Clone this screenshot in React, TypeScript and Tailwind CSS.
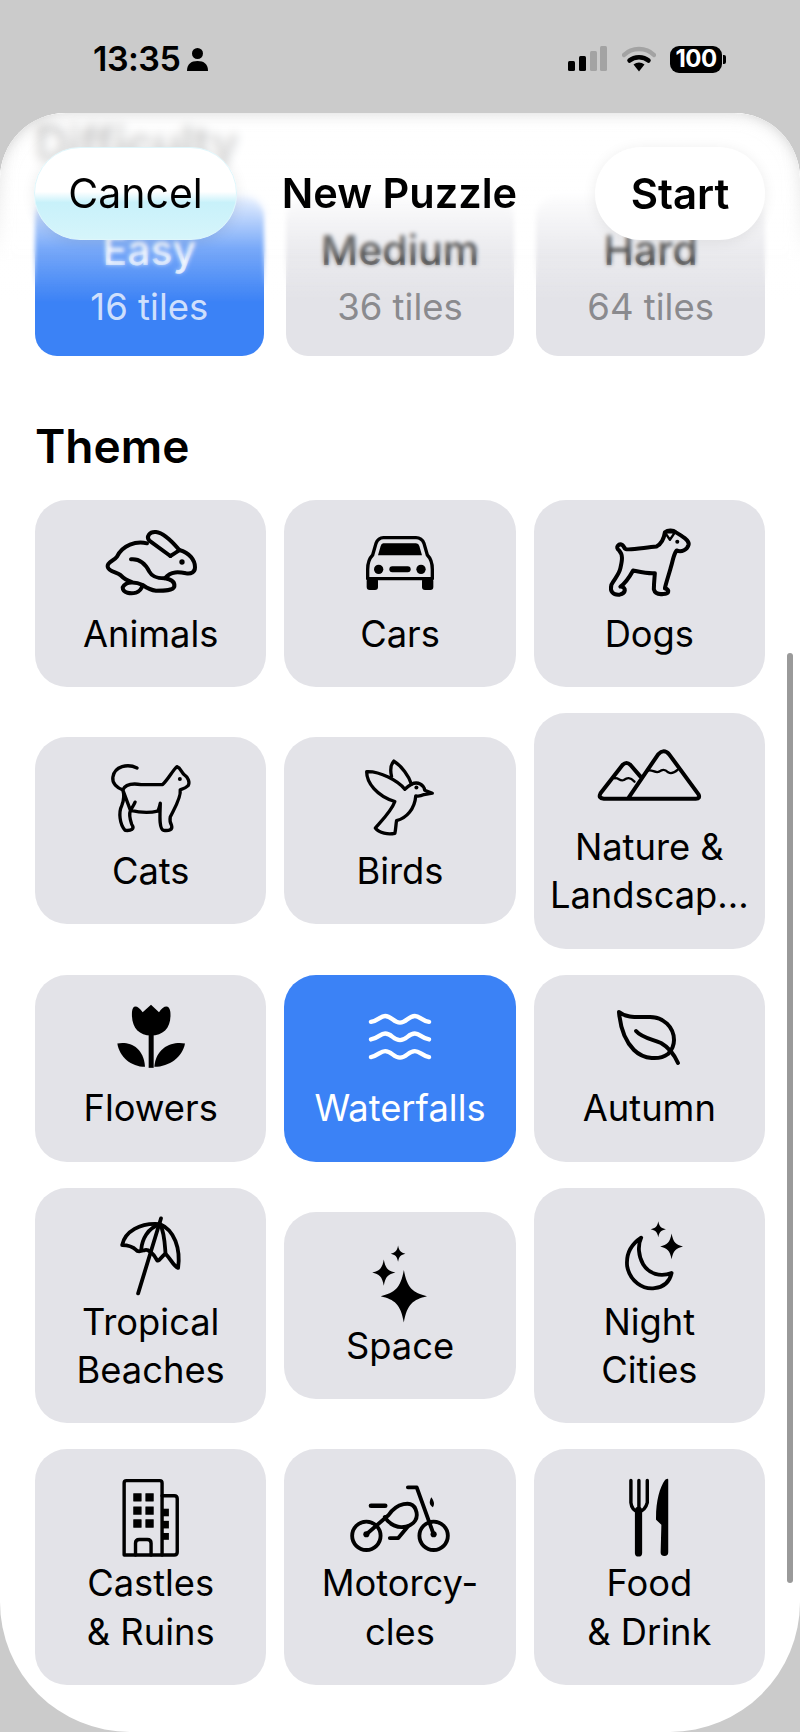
import React from 'react';

interface IconProps {
  box: string;
  w: number;
  h: number;
  sw?: number;
  className?: string;
  children: React.ReactNode;
}

function Icon({ box, w, h, sw = 10, className = '', children }: IconProps) {
  return (
    <svg
      viewBox={box}
      width={w}
      height={h}
      fill="none"
      stroke="currentColor"
      strokeWidth={sw}
      strokeLinecap="round"
      strokeLinejoin="round"
      className={`overflow-visible shrink-0 ${className}`}
    >
      {children}
    </svg>
  );
}

const Rabbit = () => (
  <Icon box="75 60 270 195" w={90} h={65} sw={12} className="mt-[1px]">
    <path d="M198 100C165 92 125 105 108 140C100 152 78 155 80 170C82 184 105 186 118 195C128 205 138 212 150 215" />
    <path d="M268 138L205 92C195 80 205 64 225 66C248 68 278 100 295 120C325 128 342 150 342 172C342 188 330 192 315 190C295 186 270 182 252 205C270 208 282 216 280 230C276 242 250 242 225 242C205 240 195 232 185 225C165 215 135 212 125 232C125 250 150 252 165 248C175 245 182 235 185 225" />
    <path d="M268 138C278 132 288 126 295 120" />
    <path d="M150 148C180 145 195 165 205 185C212 198 222 205 250 205" />
    <circle cx="303" cy="156" r="8" fill="currentColor" stroke="none" />
  </Icon>
);

const Car = () => (
  <Icon box="78 78 204 162" w={68} h={54} sw={10} className="mt-[7px]">
    <path d="M130 83H228Q245 83 252 100L262 135Q277 150 277 178V206H83V178Q83 150 98 135L108 100Q115 83 130 83Z" />
    <path d="M130 100H228Q236 100 238 108L246 136H114L122 108Q124 100 130 100Z" fill="currentColor" stroke="none" />
    <rect x="80" y="204" width="34" height="36" rx="9" fill="currentColor" stroke="none" />
    <rect x="246" y="204" width="34" height="36" rx="9" fill="currentColor" stroke="none" />
    <circle cx="116" cy="178" r="14" fill="currentColor" stroke="none" />
    <circle cx="243" cy="178" r="14" fill="currentColor" stroke="none" />
    <rect x="148" y="169" width="64" height="18" rx="9" fill="currentColor" stroke="none" />
  </Icon>
);

const Dog = () => (
  <Icon box="808 58 242 200" w={81} h={67} sw={12}>
    <path d="M858 118C870 122 910 114 950 110C965 102 972 88 975 68C985 60 1000 62 1008 68C1025 78 1048 92 1046 104C1042 120 1025 128 1010 122C1000 135 1000 150 992 175C985 200 978 220 975 235C990 240 988 252 970 252C955 254 945 250 942 238C942 220 944 205 945 190C925 192 900 186 880 182C870 200 855 222 842 230C862 232 858 250 840 254C820 256 810 245 815 225C825 205 838 195 842 175C848 150 850 135 838 122C825 112 838 100 848 106C853 110 853 115 858 118Z" />
    <path d="M975 68L1005 68L990 90Z" strokeWidth="7" />
    <circle cx="1012" cy="96" r="6" fill="currentColor" stroke="none" />
  </Icon>
);

const Cat = () => (
  <Icon box="60 30 240 205" w={80} h={68} sw={10} className="mt-[-2px]">
    <path d="M138 42C110 28 70 36 65 70C62 88 78 102 95 108" />
    <path d="M95 108C102 92 125 88 150 92H215C232 76 245 50 258 38C270 42 272 56 280 62C292 70 298 85 292 95C285 102 276 105 268 108C272 130 250 165 238 190C236 200 238 208 242 215C246 228 235 232 218 230C202 226 208 172 208 148C205 160 205 165 200 172C175 178 145 176 118 170C122 162 128 155 132 145M118 170C112 185 118 200 122 212C132 226 120 232 102 230C85 212 82 175 92 155C100 135 98 118 95 108Z" />
    <circle cx="267" cy="75" r="6" fill="currentColor" stroke="none" />
  </Icon>
);

const Bird = () => (
  <Icon box="828 18 202 224" w={67} h={75} sw={10} className="mt-[-6px]">
    <path d="M905 66C900 45 905 28 912 20C935 35 958 65 965 90" />
    <path d="M945 105C925 80 870 50 830 52C830 85 860 125 915 142C905 170 880 195 856 222C868 238 895 242 915 238C918 225 918 212 920 200C950 192 975 165 978 125C988 128 995 125 1003 121L1028 117L1005 108C1002 92 985 80 965 90C955 96 950 100 945 105Z" />
    <circle cx="980" cy="100" r="6" fill="currentColor" stroke="none" />
  </Icon>
);

const Mountain = () => (
  <Icon box="25 45 305 150" w={102} h={50} sw={12} className="mt-[8px]">
    <path d="M115 190L205 58Q222 40 238 58L326 178Q332 191 318 191H42Q24 190 32 175L98 90Q110 78 122 90L152 125" />
    <path d="M172 108C185 100 195 116 208 110C218 102 225 102 235 112C245 118 255 112 264 104" strokeWidth="7" />
    <path d="M75 130C85 126 90 140 102 135C112 128 120 126 134 140" strokeWidth="7" />
  </Icon>
);

const Tulip = () => (
  <Icon box="48 15 204 188" w={68} h={63} sw={0} className="mt-[1px]">
    <g fill="currentColor" stroke="none">
      <path d="M93 35C95 12 110 15 125 36L150 14L174 36C188 15 205 12 208 35C212 80 190 106 150 106C112 106 90 80 93 35Z" />
      <rect x="143" y="100" width="15" height="103" />
      <path d="M49 130C85 123 128 140 132 200C90 200 55 170 49 130Z" />
      <path d="M252 130C215 123 165 140 160 200C205 200 245 170 252 130Z" />
    </g>
  </Icon>
);

const Water = () => (
  <Icon box="810 45 180 130" w={60} h={43} sw={13} className="mt-[11px]">
    <path d="M812 66C835 62 840 48 855 48C875 48 880 68 900 68C920 68 925 48 945 48C960 48 965 62 988 66" />
    <path d="M812 119C835 115 840 101 855 101C875 101 880 121 900 121C920 121 925 101 945 101C960 101 965 115 988 119" />
    <path d="M812 172C835 168 840 154 855 154C875 154 880 174 900 174C920 174 925 154 945 154C960 154 965 168 988 172" />
  </Icon>
);

const Leaf = () => (
  <Icon box="0 0 62 54" w={62} h={54} sw={4} className="mt-[6px]">
    <path d="M1 2C8 8 18 7 30 7C46 6 56 18 56 30C56 36 54 40 50 44C42 50 26 50 16 40C6 30 2 14 1 2Z" />
    <path d="M18 21C24 28 34 29 43 33C50 37 56 44 60 53" />
  </Icon>
);

const Umbrella = () => (
  <Icon box="55 32 155 206" w={59} h={79} sw={10}>
    <path d="M58 105C65 70 105 45 158 50C195 65 212 115 205 165C192 160 185 140 172 128C165 130 155 150 150 145C140 125 125 115 118 118C110 120 100 125 95 118C85 108 70 105 58 105Z" />
    <path d="M158 50C125 60 110 90 108 118M158 50C170 75 170 105 172 128" />
    <path d="M160 35L100 232" />
  </Icon>
);

const star = (cx: number, cy: number, rx: number, ry: number) =>
  `M${cx} ${cy - ry}C${cx + rx * 0.14} ${cy - ry * 0.3} ${cx + rx * 0.4} ${cy - rx * 0.14} ${cx + rx} ${cy}C${cx + rx * 0.4} ${cy + rx * 0.14} ${cx + rx * 0.14} ${cy + ry * 0.3} ${cx} ${cy + ry}C${cx - rx * 0.14} ${cy + ry * 0.3} ${cx - rx * 0.4} ${cy + rx * 0.14} ${cx - rx} ${cy}C${cx - rx * 0.4} ${cy - rx * 0.14} ${cx - rx * 0.14} ${cy - ry * 0.3} ${cx} ${cy - ry}Z`;

const Sparkles = () => (
  <Icon box="715 108 140 197" w={54} h={76} sw={0} className="mt-[5px]">
    <g fill="currentColor" stroke="none">
      <path d={star(795, 238, 60, 68)} />
      <path d={star(743, 177, 30, 34)} />
      <path d={star(780, 128, 19, 21)} />
    </g>
  </Icon>
);

const Moon = () => (
  <Icon box="1375 42 150 180" w={57} h={69} sw={10} className="mt-[4px] ml-[10px]">
    <path d="M1415 85C1385 105 1375 130 1378 160C1385 200 1420 222 1450 218C1475 215 1490 200 1495 178C1465 190 1435 180 1420 155C1408 135 1405 105 1415 85Z" />
    <path d={star(1495, 108, 30, 34)} fill="currentColor" stroke="none" />
    <path d={star(1460, 63, 20, 21)} fill="currentColor" stroke="none" />
  </Icon>
);

const Building = () => (
  <Icon box="60 37 145 203" w={55} h={78} sw={9} className="mt-[1px]">
    <path d="M63 236V46Q63 40 69 40H157Q163 40 163 46V236Z" />
    <path d="M163 80H195Q203 80 203 88V228Q203 236 195 236H163" />
    <path d="M93 236V205Q93 195 103 195H124Q134 195 134 205V236" />
    <g fill="currentColor" stroke="none">
      <rect x="87" y="73" width="22" height="22" rx="1" />
      <rect x="119" y="73" width="22" height="22" rx="1" />
      <rect x="87" y="108" width="22" height="22" rx="1" />
      <rect x="119" y="108" width="22" height="22" rx="1" />
      <rect x="87" y="142" width="22" height="22" rx="1" />
      <rect x="119" y="142" width="22" height="22" rx="1" />
      <rect x="163" y="114" width="18" height="20" />
      <rect x="163" y="146" width="18" height="20" />
      <rect x="163" y="178" width="18" height="18" />
    </g>
  </Icon>
);

const Motorcycle = () => (
  <Icon box="657 52 255 174" w={98} h={67} sw={10} className="mt-[7px]">
    <circle cx="697" cy="184" r="37" />
    <circle cx="872" cy="184" r="37" />
    <circle cx="697" cy="180" r="8" fill="currentColor" stroke="none" />
    <circle cx="872" cy="180" r="8" fill="currentColor" stroke="none" />
    <path d="M805 58H828L872 180" />
    <path d="M697 180L755 130C775 100 815 90 825 115C835 140 820 155 800 160C780 165 755 155 745 135" />
    <path d="M805 160L780 190H758" />
    <path d="M709 106H746" strokeWidth="12" />
    <path d="M866 84C860 95 860 104 870 110C876 102 872 92 866 84Z" fill="currentColor" stroke="none" />
  </Icon>
);

const Utensils = () => (
  <Icon box="1385 38 105 202" w={40} h={77} sw={9} className="mt-[1px]">
    <path d="M1390 42V100Q1392 120 1410 125Q1428 120 1433 100V42M1411 42V118" />
    <path d="M1410 120V232" strokeWidth="19" />
    <path d="M1488 40V230Q1488 240 1478 240Q1468 240 1468 230L1470 158L1456 145C1455 100 1465 60 1480 40Q1488 34 1488 40Z" fill="currentColor" stroke="none" />
  </Icon>
);

const difficulties = [
  { name: 'Easy', tiles: '16 tiles', active: true },
  { name: 'Medium', tiles: '36 tiles', active: false },
  { name: 'Hard', tiles: '64 tiles', active: false },
];

const themes = [
  { label: 'Animals', icon: <Rabbit /> },
  { label: 'Cars', icon: <Car /> },
  { label: 'Dogs', icon: <Dog /> },
  { label: 'Cats', icon: <Cat /> },
  { label: 'Birds', icon: <Bird /> },
  { label: 'Nature &\nLandscap...', icon: <Mountain /> },
  { label: 'Flowers', icon: <Tulip /> },
  { label: 'Waterfalls', icon: <Water />, active: true },
  { label: 'Autumn', icon: <Leaf /> },
  { label: 'Tropical\nBeaches', icon: <Umbrella /> },
  { label: 'Space', icon: <Sparkles /> },
  { label: 'Night\nCities', icon: <Moon /> },
  { label: 'Castles\n& Ruins', icon: <Building /> },
  { label: 'Motorcy-\ncles', icon: <Motorcycle /> },
  { label: 'Food\n& Drink', icon: <Utensils /> },
];

function StatusBar() {
  return (
    <div className="h-[113px] shrink-0 relative flex items-start justify-between pl-[93px] pr-[74px] pt-[39px] text-black">
      <div className="flex items-center gap-[7px] h-[40px]">
        <span className="text-[34px] leading-[40px] font-semibold tracking-[-0.5px]">13:35</span>
        <svg viewBox="0 0 21 23" width="21" height="23" fill="currentColor" className="mt-[1px]">
          <circle cx="10.5" cy="5.5" r="5.5" />
          <path d="M0 23C0 16 4 13 10.5 13S21 16 21 23Z" />
        </svg>
      </div>
      <div className="flex items-center h-[40px]">
        <svg viewBox="0 0 39 25" width="39" height="25" className="mr-[15px] mt-[-1px]">
          <rect x="0" y="15" width="7" height="10" rx="1.5" fill="#000" />
          <rect x="11" y="10" width="7" height="15" rx="1.5" fill="#000" />
          <rect x="22" y="5" width="7" height="20" rx="1.5" fill="#a3a3a3" />
          <rect x="32" y="0" width="7" height="25" rx="1.5" fill="#a3a3a3" />
        </svg>
        <svg viewBox="0 0 34 26" width="34" height="26" fill="none" className="mr-[14px] mt-[-1px]">
          <path d="M2 9C10 1 24 1 32 9" stroke="#a3a3a3" strokeWidth="4.5" strokeLinecap="round" />
          <path d="M7.5 14.5C12.5 10 21.5 10 26.5 14.5" stroke="#000" strokeWidth="4.5" strokeLinecap="round" />
          <path d="M11.5 18.5L17 25.5L22.5 18.5C19 15.8 15 15.8 11.5 18.5Z" fill="#000" />
        </svg>
        <div className="w-[52px] h-[27px] rounded-[9px] bg-black text-white flex items-center justify-center text-[24px] leading-none font-bold tracking-[-0.5px]">
          100
        </div>
        <div className="w-[3px] h-[9px] ml-[1px] rounded-r-[2px] bg-black" />
      </div>
    </div>
  );
}

function TopBar() {
  return (
    <>
      <div className="absolute inset-x-0 top-0 h-[110px] backdrop-blur-[5px] [mask-image:linear-gradient(to_bottom,black_70%,transparent)]" />
      <div className="absolute inset-x-0 top-0 h-[175px] backdrop-blur-[2px] [mask-image:linear-gradient(to_bottom,black_78%,transparent)]" />
      <div className="absolute inset-x-0 top-0 h-[190px] bg-[linear-gradient(to_bottom,rgba(255,255,255,0.72)_0%,rgba(255,255,255,0.92)_42%,rgba(255,255,255,0.32)_71%,transparent_100%)]" />
      <div className="absolute inset-x-0 top-0 h-[150px] rounded-t-[66px] shadow-[inset_0_0_16px_rgba(190,190,190,0.6)] [mask-image:linear-gradient(to_bottom,black_20%,transparent)]" />
      <div className="absolute left-[34px] right-[35px] top-[34px] grid grid-cols-[203px_1fr_170px] items-center">
        <button className="h-[93px] rounded-[46px] border border-[#dff6fb] bg-[linear-gradient(to_bottom,#ffffff_0%,#ffffff_48%,#c8f1fa_60%,#d6f5fb_100%)] shadow-[0_2px_14px_rgba(0,0,0,0.08)] text-[41px] text-black">
          Cancel
        </button>
        <div className="pr-[33px] text-center text-[41.5px] font-semibold text-black">New Puzzle</div>
        <button className="h-[93px] rounded-[46px] bg-white shadow-[0_2px_14px_rgba(0,0,0,0.08)] text-[42px] font-semibold text-black">
          Start
        </button>
      </div>
    </>
  );
}

export default function App() {
  return (
    <div className="w-[800px] h-[1732px] bg-[#cbcbcb] flex flex-col overflow-hidden font-['Inter',sans-serif]">
      <StatusBar />
      <div className="relative flex-1 bg-white rounded-t-[66px] rounded-b-[130px] overflow-hidden">
        <div className="px-[35px] pt-[6px]">
          <h2 className="text-[46px] leading-[48px] font-semibold text-black">Difficulty</h2>
          <div className="mt-[28px] grid grid-cols-3 gap-x-[22px]">
            {difficulties.map((d) => (
              <div
                key={d.name}
                className={`h-[161px] rounded-[22px] flex flex-col items-center pt-[31px] ${d.active ? 'bg-[#3b82f6] text-white' : 'bg-[#e3e3e8] text-black'}`}
              >
                <div className="text-[41px] leading-[48px] font-medium">{d.name}</div>
                <div className={`mt-[13px] text-[36.5px] leading-[40px] ${d.active ? 'text-white/75' : 'text-[#8a8a8e]'}`}>{d.tiles}</div>
              </div>
            ))}
          </div>
          <h2 className="mt-[64px] text-[46px] leading-[52px] font-semibold text-black">Theme</h2>
          <div className="mt-[28px] grid grid-cols-3 gap-x-[18px] gap-y-[26px] items-center">
            {themes.map((t) => (
              <div
                key={t.label}
                className={`rounded-[32px] flex flex-col items-center pt-[29px] pb-[28.8px] ${t.active ? 'bg-[#3b82f6] text-white' : 'bg-[#e3e3e8] text-black'}`}
              >
                <div className="h-[72px] mb-[8.8px] flex items-start justify-center">{t.icon}</div>
                <div className="text-[36.3px] leading-[48.5px] text-center whitespace-pre-line">{t.label}</div>
              </div>
            ))}
          </div>
        </div>
        <TopBar />
        <div className="absolute right-[7px] top-[540px] w-[6px] h-[930px] rounded-full bg-[#9a9a9a]" />
      </div>
    </div>
  );
}
